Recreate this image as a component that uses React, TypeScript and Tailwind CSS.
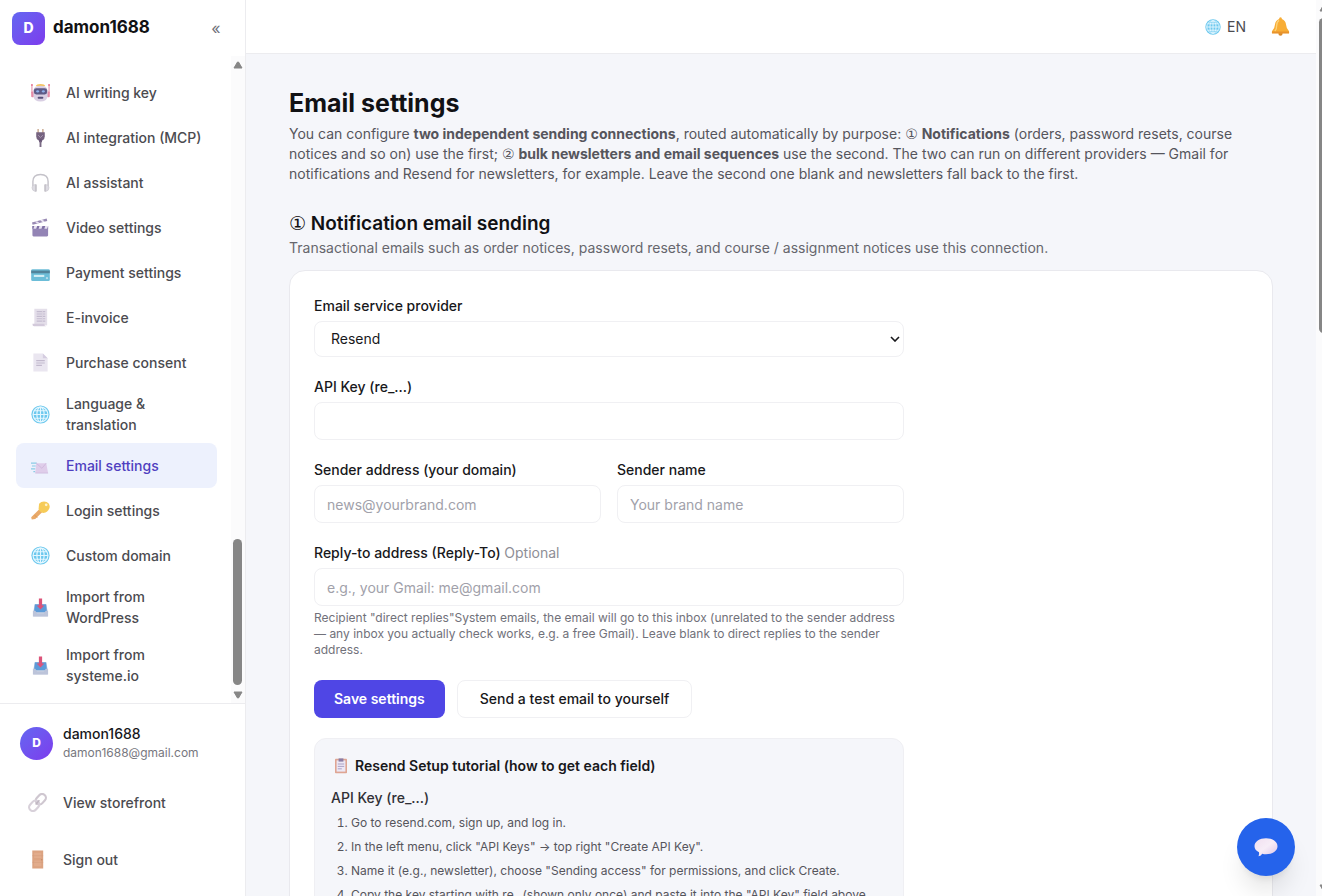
import { useState } from "react";
import type { ReactNode } from "react";

function RobotIcon() {
  return (
    <svg viewBox="0 0 20 20" className="size-full">
      <path d="M1 2v9M19 2v9" stroke="#df7f9d" strokeWidth="1" />
      <circle cx="1" cy="2" r="1" fill="#e56b8c" />
      <circle cx="19" cy="2" r="1" fill="#e56b8c" />
      <rect x="0.2" y="9" width="3" height="6" rx="1" fill="#e58aa6" />
      <rect x="16.8" y="9" width="3" height="6" rx="1" fill="#e58aa6" />
      <path d="M5 3.500Q5.500 1 10 1t5 2.500z" fill="#f5c562" />
      <path d="M2.500 8Q3 3 10 3t7.500 5v6q-1 5.500-7.500 5.500T2.500 14z" fill="#d9cfe3" />
      <rect x="3" y="5.500" width="14" height="6.500" rx="2.500" fill="#5d5a86" />
      <rect x="5.500" y="7.500" width="3" height="2.600" rx="1.300" fill="#8fb0ea" />
      <rect x="11.500" y="7.500" width="3" height="2.600" rx="1.300" fill="#8fb0ea" />
      <rect x="7" y="14.500" width="6" height="2" rx="1" fill="#58517a" />
    </svg>
  );
}

function PlugIcon() {
  return (
    <svg viewBox="0 0 20 20" className="size-full">
      <path d="M7.500 1v5M12.500 1v5" stroke="#c9a98f" strokeWidth="1.500" />
      <path d="M5.500 4.500h9v4.500q0 3-2.500 4.200H8Q5.500 12 5.500 9z" fill="#75627f" />
      <path d="M8.500 12h3v3h-3z" fill="#645374" />
      <path d="M10 14v6" stroke="#7a6a84" strokeWidth="2" />
      <path d="M7.500 7.500l2.500 2.500 2.500-2.500" stroke="#a898b2" fill="none" />
    </svg>
  );
}

function HeadphonesIcon() {
  return (
    <svg viewBox="0 0 20 20" className="size-full" fill="none">
      <path d="M2 14V9q0-7.500 8-7.500T18 9v5" stroke="#c4c2c9" strokeWidth="1.500" />
      <path d="M5 12q-4 0-4 3.500T5 19.500zM15 12q4 0 4 3.500t-4 4z" fill="#dddbe2" stroke="#c4c2c9" strokeWidth="0.600" />
      <path d="M5.300 12v7.500M14.700 12v7.500" stroke="#b8b5bd" strokeWidth="1.200" />
    </svg>
  );
}

function ClapperIcon() {
  return (
    <svg viewBox="0 0 20 20" className="size-full">
      <path d="M1.500 8.500h16.500v9.700q0 1.200-1.200 1.200H2.700q-1.200 0-1.200-1.200z" fill="#9384b5" />
      <path d="M1.500 8.500h16.500v2.800H1.500z" fill="#7f70a5" />
      <path d="M1 4.800L16.500 0.500l0.600 2.600L1.700 7.200z" fill="#9889b3" />
      <path d="M4 3.900l2.600 2 2.400-.6-2.600-2zM9.600 2.400l2.600 2 2.400-.6-2.600-2zM3.500 8.500l-1 2.800h3l1-2.800zM9 8.500l-1 2.800h3l1-2.800zM15 8.500l-1 2.800h3l1-2.800z" fill="#e9e3f2" />
    </svg>
  );
}

function CardIcon() {
  return (
    <svg viewBox="0 0 20 20" className="size-full">
      <rect x="0.200" y="6.500" width="19.600" height="12.500" rx="1.500" fill="#6cbdd8" />
      <path d="M0.200 8h19.600v2.800H0.200z" fill="#52839a" />
      <path d="M3 12.500h11v2.200H3z" fill="#d3eef5" />
      <circle cx="16.800" cy="16" r="1.200" fill="#b7dceb" />
    </svg>
  );
}

function InvoiceIcon() {
  return (
    <svg viewBox="0 0 20 20" className="size-full">
      <path d="M3.500 0.800h13.500v17.500H3.500z" fill="#e4dfea" />
      <path d="M1.500 16.500H14q0 2.800 2 2.800H3.200q-1.700-.2-1.700-2.800z" fill="#d3cadb" />
      <path d="M6 3.800h9M6 6.300h9M6 8.800h9M6 11.300h9M6 13.800h9" stroke="#c4bccf" strokeWidth="1.200" />
      <path d="M12 3v12" stroke="#dcd5e2" />
    </svg>
  );
}

function PageIcon() {
  return (
    <svg viewBox="0 0 20 20" className="size-full">
      <path d="M2.500 0.500h10l5 5v14h-15z" fill="#eae6f0" />
      <path d="M12.500 0.500v5h5z" fill="#d5cde0" />
      <path d="M5.500 8h9M5.500 10.500h9M5.500 13h6" stroke="#c2b9cd" strokeWidth="1.200" />
    </svg>
  );
}

function GlobeIcon() {
  return (
    <svg viewBox="0 0 20 20" className="size-full" fill="none">
      <circle cx="10" cy="10" r="9.600" fill="#6cc8ee" />
      <g stroke="#e4f7ff" strokeWidth="1.200">
        <circle cx="10" cy="10" r="7.800" />
        <ellipse cx="10" cy="10" rx="3.800" ry="7.800" />
        <path d="M10 2v16M2 10h16M3.500 6h13M3.500 14h13" />
      </g>
    </svg>
  );
}

function MailIcon() {
  return (
    <svg viewBox="0 0 20 20" className="size-full" fill="none">
      <path d="M0 7.500h6M1 10.500h4M0 13.500h4.500M2.500 16.500h2" stroke="#8ccbe6" strokeWidth="1.200" />
      <path d="M5.500 7.500h10.500l2 10.500H4.500z" fill="#dfcdea" />
      <path d="M5.500 7.500l6 5.500 4.500-5.500" stroke="#cbb4da" strokeWidth="0.800" />
      <path d="M4.500 18h13.500" stroke="#cdb8dc" strokeWidth="0.800" />
    </svg>
  );
}

function KeyIcon() {
  return (
    <svg viewBox="0 0 20 20" className="size-full">
      <path d="M9.500 8l3 3-8 8-3.700.5-.6-2.500z" fill="#e9a968" />
      <path d="M4 15l2.500 2.500" stroke="#d9944f" strokeWidth="1" />
      <path d="M8.500 3q3-3.500 8-2 4 2 3 6-1.500 5-6.500 5.500-4-.5-5-4z" fill="#f6cb58" />
      <circle cx="16" cy="4" r="1.400" fill="#fdf3d0" />
    </svg>
  );
}

function InboxIcon() {
  return (
    <svg viewBox="0 0 20 20" className="size-full">
      <path d="M4 6.500h12l1.500 7v6h-15v-6z" fill="#cdd3e2" />
      <path d="M4 6.500h12l0.800 8.500H3.200z" fill="#5c9bd9" />
      <path d="M2 13.500h2.500l2 2.800h7l2-2.800H18v6H2z" fill="#bcc4da" />
      <path d="M8.300 0.500h3.400v7.500H14L10 12 6 8h2.300z" fill="#dc5379" />
    </svg>
  );
}

function ChainIcon() {
  return (
    <svg viewBox="0 0 20 20" className="size-full" fill="none" strokeWidth="2.300">
      <rect x="7.500" y="2.500" width="12" height="8" rx="4" transform="rotate(-48 13.500 6.500)" stroke="#cfc7d0" />
      <rect x="0.500" y="9.500" width="12" height="8" rx="4" transform="rotate(-48 6.500 13.500)" stroke="#d8d1da" />
      <path d="M8 12l4-4.300" stroke="#bfb6c1" strokeWidth="1.600" />
    </svg>
  );
}

function DoorIcon() {
  return (
    <svg viewBox="0 0 20 20" className="size-full">
      <path d="M4.500 0.500H16v19H4.500z" fill="#dca381" />
      <path d="M6.500 3H14v5.500H6.500zM6.500 11H14v6H6.500z" fill="#e2ac8c" />
      <path d="M4.500 6H16M4.500 13H16" stroke="#d3987a" strokeWidth="0.500" />
      <circle cx="14.500" cy="10.300" r="0.700" fill="#c08665" />
    </svg>
  );
}

function BellIcon() {
  return (
    <svg viewBox="0 0 20 20" className="size-full">
      <circle cx="10" cy="17.500" r="2.200" fill="#d98a2b" />
      <path d="M8.500 2q0-1.700 1.500-1.700T11.500 2q4 1.500 4.300 6 .2 4 3.200 7v2H1v-2q3-3 3.200-7Q4.500 3.500 8.500 2z" fill="#f8ad35" />
      <path d="M8.500 3.500Q6 5 6 9t-2 6" stroke="#fcd37a" strokeWidth="1.400" fill="none" />
      <path d="M1 15.300h18v2H1z" fill="#e8932c" />
    </svg>
  );
}

function ClipboardIcon() {
  return (
    <svg viewBox="0 0 20 20" className="size-full">
      <rect x="2.500" y="1" width="15" height="18" rx="1" fill="#dfa593" />
      <path d="M4.500 3h11v14h-11z" fill="#ece8f5" />
      <path d="M7 0.500h6v4H7z" fill="#8b7da5" />
      <path d="M6 7.500h8M6 10.500h8M6 13.500h5" stroke="#a99fc4" strokeWidth="1.200" />
    </svg>
  );
}

function BubbleIcon() {
  return (
    <svg viewBox="0 0 24 20" className="size-full">
      <defs>
        <linearGradient id="bubble" x1="0" y1="0" x2="1" y2="1">
          <stop offset="0" stopColor="#f1dff0" />
          <stop offset="0.500" stopColor="#f7edf7" />
          <stop offset="1" stopColor="#dcc5e6" />
        </linearGradient>
      </defs>
      <path d="M12 1.200c6.500 0 11.500 3.300 11.500 8s-5 8-11.500 8q-2 0-3.800-.5-1 2-3.700 2.500 1-1.600.5-4Q.5 13 .5 9.200c0-4.700 5-8 11.500-8z" fill="url(#bubble)" />
    </svg>
  );
}

interface NavItem {
  label: string;
  icon: ReactNode;
  active?: boolean;
}

const navItems: NavItem[] = [
  { label: "AI writing key", icon: <RobotIcon /> },
  { label: "AI integration (MCP)", icon: <PlugIcon /> },
  { label: "AI assistant", icon: <HeadphonesIcon /> },
  { label: "Video settings", icon: <ClapperIcon /> },
  { label: "Payment settings", icon: <CardIcon /> },
  { label: "E-invoice", icon: <InvoiceIcon /> },
  { label: "Purchase consent", icon: <PageIcon /> },
  { label: "Language & translation", icon: <GlobeIcon /> },
  { label: "Email settings", icon: <MailIcon />, active: true },
  { label: "Login settings", icon: <KeyIcon /> },
  { label: "Custom domain", icon: <GlobeIcon /> },
  { label: "Import from WordPress", icon: <InboxIcon /> },
  { label: "Import from systeme.io", icon: <InboxIcon /> },
];

const steps = [
  "Go to resend.com, sign up, and log in.",
  'In the left menu, click "API Keys" → top right "Create API Key".',
  'Name it (e.g., newsletter), choose "Sending access" for permissions, and click Create.',
  'Copy the key starting with re_ (shown only once) and paste it into the "API Key" field above.',
];

const inputClass =
  "block h-[38px] w-full rounded-lg border border-[#f0f0f3] bg-white px-3 text-sm text-[#18181b] placeholder:text-[#a1a1aa] outline-none focus:border-indigo-400";
const labelClass = "mb-1 block text-sm leading-[22px] font-medium text-[#18181b]";

function Arrow({ down }: { down?: boolean }) {
  return (
    <svg viewBox="0 0 10 8" className="h-2 w-2.5 shrink-0">
      <path
        d={down ? "M1 1h8L5.500 7h-1z" : "M1 7h8L5.500 1h-1z"}
        fill="#868686"
        stroke="#868686"
        strokeLinejoin="round"
      />
    </svg>
  );
}

// Inter draws its circled digits oversized, so these use another face
function Circled({ children }: { children: string }) {
  return <span className="font-['DejaVu_Sans',sans-serif] leading-none font-normal">{children}</span>;
}

function Sidebar() {
  return (
    <aside className="flex w-[246px] shrink-0 flex-col border-r border-[#ececef] bg-white">
      <div className="flex h-14 shrink-0 items-center gap-2 pr-5 pl-3">
        <div className="flex size-[33px] items-center justify-center rounded-lg bg-linear-to-br from-[#6366f1] to-[#7c3aed] text-sm font-extrabold text-white">
          D
        </div>
        <span className="flex-1 text-[17px] font-bold text-[#111114]">damon1688</span>
        <button type="button" aria-label="Collapse sidebar" className="w-[18px] text-base text-[#71717a]">
          «
        </button>
      </div>

      <div className="flex min-h-0 flex-1">
        <nav className="min-w-0 flex-1 overflow-hidden pt-3.5 pr-3.5 pl-4">
          {navItems.map((item) => (
            <a
              key={item.label}
              href="#"
              className={
                item.active
                  ? "flex items-center gap-4 rounded-lg bg-[#edf1fd] py-2 pr-3 pl-[15px] text-sm leading-[21px] font-medium text-[#4f3fc0]"
                  : "flex items-center gap-4 rounded-lg py-2 pr-3 pl-[15px] text-sm leading-[21px] font-medium text-[#4b4b50] hover:bg-gray-50"
              }
            >
              <span className="flex h-[29px] w-[19px] shrink-0 items-center">
                <span className="size-[19px]">{item.icon}</span>
              </span>
              {item.label}
            </a>
          ))}
        </nav>
        <div className="flex w-3.5 flex-col items-center bg-[#fbfbfc] pt-[5px] pr-px pb-1">
          <Arrow />
          <div className="flex-1" />
          <div className="mb-1.5 h-[146px] w-[9px] rounded-full bg-[#868686]" />
          <Arrow down />
        </div>
      </div>

      <div className="h-[193px] shrink-0 border-t border-[#ececef] pt-5">
        <div className="flex items-center gap-2.5 pl-5">
          <div className="flex size-[33px] items-center justify-center rounded-full bg-linear-to-br from-[#6366f1] to-[#7c3aed] text-xs font-extrabold text-white">
            D
          </div>
          <div>
            <p className="text-sm leading-5 font-medium text-[#18181b]">damon1688</p>
            <p className="text-xs leading-[18px] text-[#77777e]">damon1688@gmail.com</p>
          </div>
        </div>
        <a href="#" className="mt-3 flex h-[57px] items-center gap-4 pl-7 text-sm font-medium text-[#4b4b50]">
          <span className="size-[19px]">
            <ChainIcon />
          </span>
          View storefront
        </a>
        <button type="button" className="flex h-[57px] items-center gap-4 pl-7 text-sm font-medium text-[#4b4b50]">
          <span className="size-[19px]">
            <DoorIcon />
          </span>
          Sign out
        </button>
      </div>
    </aside>
  );
}

function SettingsForm() {
  const [provider, setProvider] = useState("Resend");

  return (
    <form className="max-w-[590px]" onSubmit={(e) => e.preventDefault()}>
      <label htmlFor="provider" className={labelClass}>
        Email service provider
      </label>
      <div className="relative">
        <select
          id="provider"
          value={provider}
          onChange={(e) => setProvider(e.target.value)}
          className="block h-9 w-full appearance-none rounded-lg border border-[#f0f0f3] bg-white px-4 text-sm text-[#18181b] outline-none"
        >
          <option>Resend</option>
          <option>Gmail</option>
        </select>
        <svg viewBox="0 0 10 6" className="pointer-events-none absolute top-[15px] right-1 h-1.5 w-2.5" fill="none">
          <path d="M1 1l4 4 4-4" stroke="#18181b" strokeWidth="1.600" />
        </svg>
      </div>

      <div className="mt-[19px]">
        <label htmlFor="api-key" className={labelClass}>
          API Key (re_...)
        </label>
        <input id="api-key" type="text" className={inputClass} />
      </div>

      <div className="mt-[19px] grid grid-cols-2 gap-4">
        <div>
          <label htmlFor="sender" className={labelClass}>
            Sender address (your domain)
          </label>
          <input id="sender" type="email" placeholder="news@yourbrand.com" className={inputClass} />
        </div>
        <div>
          <label htmlFor="sender-name" className={labelClass}>
            Sender name
          </label>
          <input id="sender-name" type="text" placeholder="Your brand name" className={inputClass} />
        </div>
      </div>

      <div className="mt-[19px]">
        <label htmlFor="reply-to" className={labelClass}>
          Reply-to address (Reply-To) <span className="font-normal text-[#8e8e96]">Optional</span>
        </label>
        <input id="reply-to" type="email" placeholder="e.g., your Gmail: me@gmail.com" className={inputClass} />
        <p className="mt-1 text-xs leading-4 text-[#71717a]">
          Recipient "direct replies"System emails, the email will go to this inbox (unrelated to the sender address —
          any inbox you actually check works, e.g. a free Gmail). Leave blank to direct replies to the sender address.
        </p>
      </div>

      <div className="mt-[22px] flex gap-3">
        <button type="submit" className="h-[38px] rounded-lg bg-[#4f46e5] px-5 text-sm font-semibold text-white">
          Save settings
        </button>
        <button
          type="button"
          className="h-[38px] rounded-lg border border-[#f0f0f3] bg-white px-[22px] text-sm font-medium text-[#18181b]"
        >
          Send a test email to yourself
        </button>
      </div>
    </form>
  );
}

export default function App() {
  return (
    <div className="flex h-screen overflow-hidden bg-[#f5f6fa] font-['Inter',sans-serif] text-[#18181b]">
      <Sidebar />

      <div className="flex min-w-0 flex-1 flex-col">
        <header className="flex h-[54px] shrink-0 items-center justify-end gap-[25px] border-b border-[#ececef] bg-white pr-[26px]">
          <button type="button" className="flex items-center gap-1.5 text-sm text-[#4b4b50]">
            <span className="size-4">
              <GlobeIcon />
            </span>
            EN
          </button>
          <button type="button" aria-label="Notifications" className="size-[19px]">
            <BellIcon />
          </button>
        </header>

        <main className="min-h-0 flex-1 overflow-hidden px-[43px] pt-8">
          <h1 className="text-[25px] leading-[34px] font-bold text-[#111114]">Email settings</h1>
          <p className="mt-1 text-sm leading-5 text-[#55555c]">
            You can configure <strong className="font-bold">two independent sending connections</strong>, routed
            automatically by purpose: <Circled>①</Circled> <strong className="font-bold">Notifications</strong>{" "}
            (orders, password resets, course notices and so on) use the first; <Circled>②</Circled>{" "}
            <strong className="font-bold">bulk newsletters and email sequences</strong> use the second. The two can run
            on different providers — Gmail for notifications and Resend for newsletters, for example. Leave the second
            one blank and newsletters fall back to the first.
          </p>

          <h2 className="mt-[26px] text-[19px] leading-7 font-semibold text-[#111114]">
            <Circled>①</Circled> Notification email sending
          </h2>
          <p className="text-sm leading-5 text-[#66666d]">
            Transactional emails such as order notices, password resets, and course / assignment notices use this
            connection.
          </p>

          <section className="mt-3 rounded-2xl border border-[#e9e9ee] bg-white p-6">
            <SettingsForm />

            <div className="mt-5 max-w-[590px] rounded-xl border border-[#efeff3] bg-[#f5f6fa] p-4">
              <h3 className="flex items-center gap-1.5 pl-0.5 text-sm leading-[22px] font-semibold text-[#18181b]">
                <span className="size-4">
                  <ClipboardIcon />
                </span>
                Resend Setup tutorial (how to get each field)
              </h3>
              <h4 className="mt-2.5 text-sm leading-[22px] font-medium text-[#303036]">API Key (re_...)</h4>
              <ol className="mt-0.5 list-decimal pl-5 text-xs leading-6 text-[#55555c]">
                {steps.map((step) => (
                  <li key={step}>{step}</li>
                ))}
              </ol>
            </div>
          </section>
        </main>
      </div>

      <div className="flex w-1.5 shrink-0 flex-col overflow-hidden bg-[#fbfbfc] pt-1 pb-1 pl-[3px]">
        <Arrow />
        <div className="mt-1.5 h-[315px] w-[9px] rounded-full bg-[#868686]" />
        <div className="flex-1" />
        <Arrow down />
      </div>

      <button
        type="button"
        aria-label="Open chat"
        className="fixed right-[27px] bottom-5 flex size-[58px] items-center justify-center rounded-full bg-[#2563eb] shadow-xl"
      >
        <span className="h-5 w-6">
          <BubbleIcon />
        </span>
      </button>
    </div>
  );
}
